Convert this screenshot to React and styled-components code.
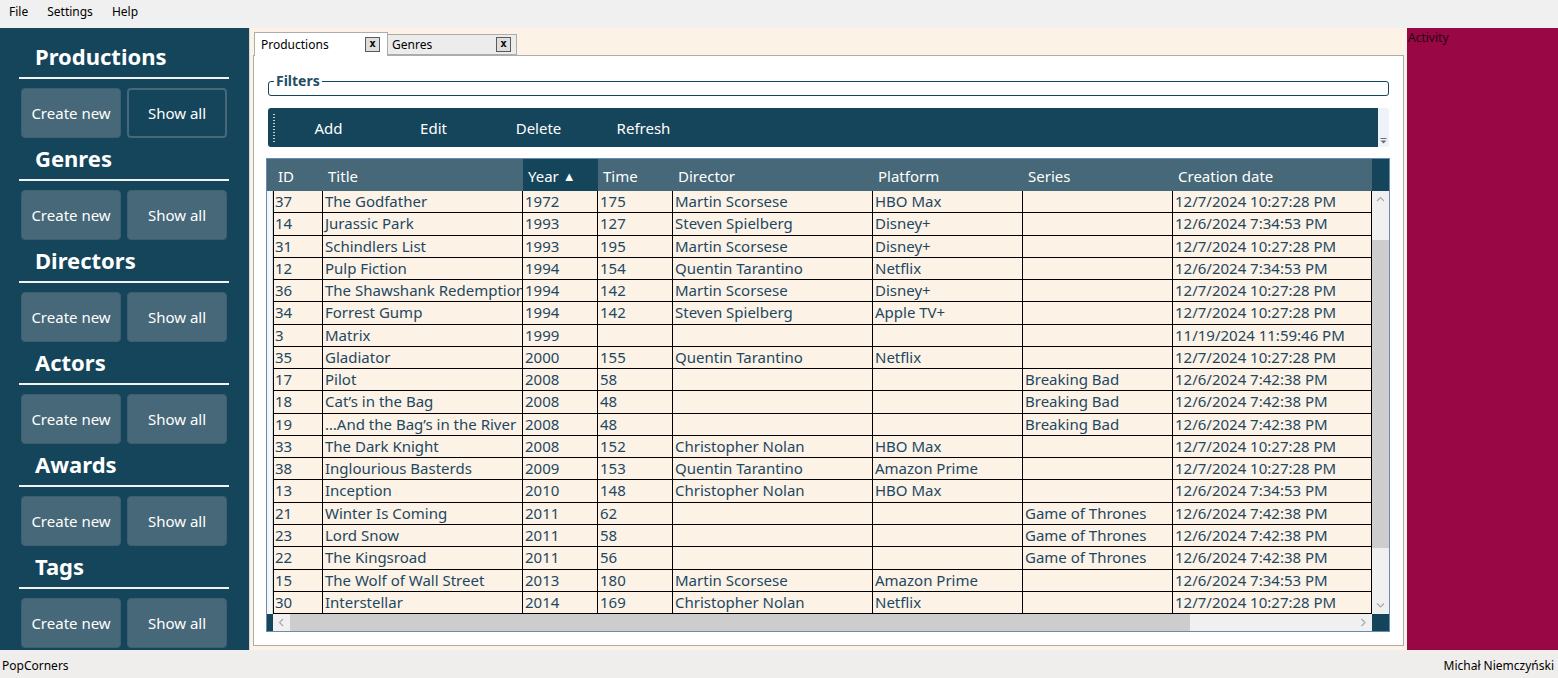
import React from 'react';
import styled, { createGlobalStyle } from 'styled-components';

const GlobalStyle = createGlobalStyle`
  html, body {
    margin: 0;
    padding: 0;
  }
  body {
    font-family: "Noto Sans", "Open Sans", sans-serif;
    background: #f0f0f0;
  }
  * {
    box-sizing: border-box;
  }
`;

const sections = ['Productions', 'Genres', 'Directors', 'Actors', 'Awards', 'Tags'];

const columns = [
  { key: 'id', label: 'ID', width: 50 },
  { key: 'title', label: 'Title', width: 200 },
  { key: 'year', label: 'Year', width: 75, sorted: true },
  { key: 'time', label: 'Time', width: 75 },
  { key: 'director', label: 'Director', width: 200 },
  { key: 'platform', label: 'Platform', width: 150 },
  { key: 'series', label: 'Series', width: 150 },
  { key: 'created', label: 'Creation date', width: 199 },
];

const rows = [
  ['37', 'The Godfather', '1972', '175', 'Martin Scorsese', 'HBO Max', '', '12/7/2024 10:27:28 PM'],
  ['14', 'Jurassic Park', '1993', '127', 'Steven Spielberg', 'Disney+', '', '12/6/2024 7:34:53 PM'],
  ['31', 'Schindlers List', '1993', '195', 'Martin Scorsese', 'Disney+', '', '12/7/2024 10:27:28 PM'],
  ['12', 'Pulp Fiction', '1994', '154', 'Quentin Tarantino', 'Netflix', '', '12/6/2024 7:34:53 PM'],
  ['36', 'The Shawshank Redemption', '1994', '142', 'Martin Scorsese', 'Disney+', '', '12/7/2024 10:27:28 PM'],
  ['34', 'Forrest Gump', '1994', '142', 'Steven Spielberg', 'Apple TV+', '', '12/7/2024 10:27:28 PM'],
  ['3', 'Matrix', '1999', '', '', '', '', '11/19/2024 11:59:46 PM'],
  ['35', 'Gladiator', '2000', '155', 'Quentin Tarantino', 'Netflix', '', '12/7/2024 10:27:28 PM'],
  ['17', 'Pilot', '2008', '58', '', '', 'Breaking Bad', '12/6/2024 7:42:38 PM'],
  ['18', 'Cat\u2019s in the Bag', '2008', '48', '', '', 'Breaking Bad', '12/6/2024 7:42:38 PM'],
  ['19', '\u2026And the Bag\u2019s in the River', '2008', '48', '', '', 'Breaking Bad', '12/6/2024 7:42:38 PM'],
  ['33', 'The Dark Knight', '2008', '152', 'Christopher Nolan', 'HBO Max', '', '12/7/2024 10:27:28 PM'],
  ['38', 'Inglourious Basterds', '2009', '153', 'Quentin Tarantino', 'Amazon Prime', '', '12/7/2024 10:27:28 PM'],
  ['13', 'Inception', '2010', '148', 'Christopher Nolan', 'HBO Max', '', '12/6/2024 7:34:53 PM'],
  ['21', 'Winter Is Coming', '2011', '62', '', '', 'Game of Thrones', '12/6/2024 7:42:38 PM'],
  ['23', 'Lord Snow', '2011', '58', '', '', 'Game of Thrones', '12/6/2024 7:42:38 PM'],
  ['22', 'The Kingsroad', '2011', '56', '', '', 'Game of Thrones', '12/6/2024 7:42:38 PM'],
  ['15', 'The Wolf of Wall Street', '2013', '180', 'Martin Scorsese', 'Amazon Prime', '', '12/6/2024 7:34:53 PM'],
  ['30', 'Interstellar', '2014', '169', 'Christopher Nolan', 'Netflix', '', '12/7/2024 10:27:28 PM'],
];

const Chevron = ({ dir }) => {
  const pts = {
    up: '1,5 4.5,1.5 8,5',
    down: '1,1.5 4.5,5 8,1.5',
    left: '5,1 1.5,4.5 5,8',
    right: '1.5,1 5,4.5 1.5,8',
  }[dir];
  const horiz = dir === 'left' || dir === 'right';
  return (
    <svg width={horiz ? 7 : 9} height={horiz ? 9 : 7} viewBox={horiz ? '0 0 7 9' : '0 0 9 7'}>
      <polyline points={pts} fill="none" stroke="#a6a6a6" strokeWidth="1.1" />
    </svg>
  );
};

const App = () => {
  return (
    <Window>
      <GlobalStyle />
      <MenuBar>
        <MenuItem>File</MenuItem>
        <MenuItem>Settings</MenuItem>
        <MenuItem>Help</MenuItem>
      </MenuBar>

      <Main>
        <SideBar>
          {sections.map((name, i) => (
            <Section key={name}>
              <SectionTitle>{name}</SectionTitle>
              <ButtonRow>
                <SideButton>Create new</SideButton>
                <SideButton active={i === 0}>Show all</SideButton>
              </ButtonRow>
            </Section>
          ))}
        </SideBar>

        <Center>
          <TabStrip>
            <Tab selected>
              Productions
              <CloseBox>x</CloseBox>
            </Tab>
            <Tab>
              Genres
              <CloseBox>x</CloseBox>
            </Tab>
          </TabStrip>

          <Panel>
            <FilterBox>
              <legend>Filters</legend>
              <FilterBody />
            </FilterBox>

            <ToolBarWrap>
              <ToolBar>
                <Grip />
                <ToolButton>Add</ToolButton>
                <ToolButton>Edit</ToolButton>
                <ToolButton>Delete</ToolButton>
                <ToolButton>Refresh</ToolButton>
              </ToolBar>
              <Overflow>
                <svg width="7" height="6" viewBox="0 0 7 6">
                  <line x1="0.5" y1="0.5" x2="6.5" y2="0.5" stroke="#6d6d6d" />
                  <polygon points="0.5,2.5 6.5,2.5 3.5,5.5" fill="#6d6d6d" />
                </svg>
              </Overflow>
            </ToolBarWrap>

            <Grid>
              <HeaderRow>
                <HeaderCorner />
                {columns.map((c) => (
                  <HeaderCell key={c.key} w={c.width} sorted={c.sorted}>
                    {c.label}
                    {c.sorted && <SortArrow>▲</SortArrow>}
                  </HeaderCell>
                ))}
                <DarkCorner />
              </HeaderRow>

              <BodyWrap>
                <Rows>
                  {rows.map((r) => (
                    <RowLine key={r[0]}>
                      <RowHead />
                      {r.map((v, j) => (
                        <Cell key={j} w={columns[j].width}>
                          {v}
                        </Cell>
                      ))}
                    </RowLine>
                  ))}
                </Rows>
                <VScroll>
                  <ArrowBox>
                    <Chevron dir="up" />
                  </ArrowBox>
                  <VTrack>
                    <VThumb />
                  </VTrack>
                  <ArrowBox>
                    <Chevron dir="down" />
                  </ArrowBox>
                </VScroll>
              </BodyWrap>

              <HScrollRow>
                <DarkStub />
                <HScroll>
                  <ArrowBox>
                    <Chevron dir="left" />
                  </ArrowBox>
                  <HTrack>
                    <HThumb />
                  </HTrack>
                  <ArrowBox>
                    <Chevron dir="right" />
                  </ArrowBox>
                </HScroll>
                <DarkCorner />
              </HScrollRow>
            </Grid>
          </Panel>
        </Center>

        <ActivityPanel>Activity</ActivityPanel>
      </Main>

      <StatusBar>
        <span>PopCorners</span>
        <span>Michał Niemczyński</span>
      </StatusBar>
    </Window>
  );
};

const Window = styled.div`
  width: 1558px;
  height: 678px;
  display: flex;
  flex-direction: column;
  overflow: hidden;
`;

const MenuBar = styled.div`
  height: 28px;
  display: flex;
  background: #f0f0f0;
  font-size: 12px;
  color: #000;
`;

const MenuItem = styled.div`
  padding: 3px 10px 0 9px;
  line-height: 18px;
`;

const Main = styled.div`
  height: 622px;
  display: flex;
`;

const SideBar = styled.div`
  width: 249px;
  flex-shrink: 0;
  background: #15455b;
  padding-top: 8px;
`;

const Section = styled.div`
  margin-top: 5px;
`;

const SectionTitle = styled.div`
  margin: 0 20px 0 19px;
  padding: 0 0 6px 16px;
  border-bottom: 2px solid #f2f2f2;
  font-size: 22px;
  font-weight: 700;
  line-height: 30px;
  color: #fff;
`;

const ButtonRow = styled.div`
  display: flex;
  gap: 6px;
  margin: 9px 0 0 21px;
`;

const SideButton = styled.div`
  width: 100px;
  height: 50px;
  display: flex;
  align-items: center;
  justify-content: center;
  border-radius: 4px;
  font-size: 15px;
  color: #fff;
  background: ${(p) => (p.active ? '#15455b' : '#466878')};
  border: ${(p) => (p.active ? '2px solid #466878' : '1px solid #3f5f70')};
`;

const Center = styled.div`
  flex: 1;
  display: flex;
  flex-direction: column;
  background: #fdf2e6;
  border-left: 1px solid #ddd8d2;
  padding: 5px 3px 4px 3px;
`;

const TabStrip = styled.div`
  height: 22px;
  display: flex;
  align-items: flex-end;
  padding-left: 1px;
  position: relative;
  z-index: 1;
`;

const Tab = styled.div`
  display: flex;
  align-items: center;
  justify-content: space-between;
  font-size: 12px;
  color: #000;
  border: 1px solid #acacac;
  border-bottom: ${(p) => (p.selected ? 'none' : '1px solid #acacac')};
  background: ${(p) => (p.selected ? '#fff' : '#ececec')};
  width: ${(p) => (p.selected ? '134px' : '130px')};
  height: ${(p) => (p.selected ? '24px' : '21px')};
  margin-bottom: ${(p) => (p.selected ? '-1px' : '0')};
  padding: ${(p) => (p.selected ? '0 7px 1px 6px' : '0 5px 0 4px')};
  margin-left: ${(p) => (p.selected ? '0' : '-1px')};
`;

const CloseBox = styled.div`
  width: 15px;
  height: 15px;
  border: 1px solid #5a5a5a;
  background: #dedede;
  display: flex;
  align-items: center;
  justify-content: center;
  font-family: "DejaVu Sans Mono", monospace;
  font-weight: 700;
  font-size: 11px;
  line-height: 1;
  padding-bottom: 2px;
`;

const Panel = styled.div`
  height: 591px;
  display: flex;
  flex-direction: column;
  background: #fff;
  border: 1px solid #acacac;
  padding: 0 13px 0 12px;
`;

const FilterBox = styled.fieldset`
  margin: 17px 1px 0 2px;
  padding: 0;
  border: 1px solid #15455b;
  border-radius: 3px;
  min-width: 0;

  > legend {
    margin-left: 5px;
    padding: 0 2px;
    font-size: 14px;
    font-weight: 700;
    line-height: 16px;
    color: #234e63;
  }
`;

const FilterBody = styled.div`
  height: 6px;
`;

const ToolBarWrap = styled.div`
  display: flex;
  height: 39px;
  margin: 12px 1px 0 2px;
`;

const ToolBar = styled.div`
  flex: 1;
  display: flex;
  align-items: center;
  background: #15455b;
  border-radius: 3px 0 0 3px;
  padding-left: 5px;
`;

const Grip = styled.div`
  width: 2px;
  height: 28px;
  background: repeating-linear-gradient(to bottom, #c9d3da 0 1px, transparent 1px 3px);
  margin-right: 1px;
`;

const ToolButton = styled.div`
  width: 105px;
  text-align: center;
  font-size: 15px;
  color: #fff;
`;

const Overflow = styled.div`
  width: 11px;
  background: #eef3fa;
  border-radius: 0 3px 3px 0;
  display: flex;
  align-items: flex-end;
  justify-content: center;
  padding-bottom: 3px;
`;

const Grid = styled.div`
  height: 474px;
  margin-top: 11px;
  border: 1px solid #688caf;
  display: flex;
  flex-direction: column;
  background: #fff;
`;

const HeaderRow = styled.div`
  height: 32px;
  display: flex;
  background: #466878;
`;

const HeaderCorner = styled.div`
  width: 6px;
  flex-shrink: 0;
`;

const HeaderCell = styled.div`
  width: ${(p) => p.w}px;
  flex-shrink: 0;
  padding-left: 5px;
  line-height: 34px;
  font-size: 15px;
  color: #fff;
  white-space: nowrap;
  background: ${(p) => (p.sorted ? '#15455b' : 'transparent')};
`;

const SortArrow = styled.span`
  font-size: 13px;
  margin-left: 4px;
  position: relative;
  top: -1px;
`;

const DarkCorner = styled.div`
  width: 17px;
  flex-shrink: 0;
  background: #15455b;
`;

const BodyWrap = styled.div`
  height: 423px;
  display: flex;
`;

const Rows = styled.div`
  width: 1105px;
  overflow: hidden;
`;

const RowLine = styled.div`
  height: 22.28px;
  display: flex;
  background: #fdf2e6;
`;

const RowHead = styled.div`
  width: 6px;
  flex-shrink: 0;
  background: #f4f6f8;
  border-right: 1px solid #d5dbe0;
`;

const Cell = styled.div`
  width: ${(p) => p.w}px;
  flex-shrink: 0;
  overflow: hidden;
  white-space: nowrap;
  padding-left: 2px;
  border-right: 1px solid #000;
  border-bottom: 1px solid #000;
  font-size: 15px;
  line-height: 21px;
  color: #1c4862;

  &:nth-child(2) {
    border-left: 1px solid #000;
    padding-left: 1px;
  }
`;

const VScroll = styled.div`
  width: 17px;
  display: flex;
  flex-direction: column;
  background: #f0f0f0;
`;

const ArrowBox = styled.div`
  width: 17px;
  height: 17px;
  flex-shrink: 0;
  display: flex;
  align-items: center;
  justify-content: center;
`;

const VTrack = styled.div`
  flex: 1;
  padding-top: 32px;
`;

const VThumb = styled.div`
  height: 308px;
  background: #cdcdcd;
`;

const HScrollRow = styled.div`
  height: 17px;
  display: flex;
`;

const DarkStub = styled.div`
  width: 6px;
  background: #15455b;
`;

const HScroll = styled.div`
  width: 1099px;
  display: flex;
  background: #f0f0f0;
`;

const HTrack = styled.div`
  flex: 1;
`;

const HThumb = styled.div`
  width: 900px;
  height: 100%;
  background: #cdcdcd;
`;

const ActivityPanel = styled.div`
  width: 151px;
  flex-shrink: 0;
  background: #990745;
  padding: 1px 1px;
  font-size: 12px;
  line-height: 18px;
  color: #1e0610;
`;

const StatusBar = styled.div`
  height: 28px;
  display: flex;
  align-items: center;
  justify-content: space-between;
  padding: 2px 4px 0 2px;
  background: #f0eeec;
  font-size: 12px;
  color: #000;
`;

export default App;
